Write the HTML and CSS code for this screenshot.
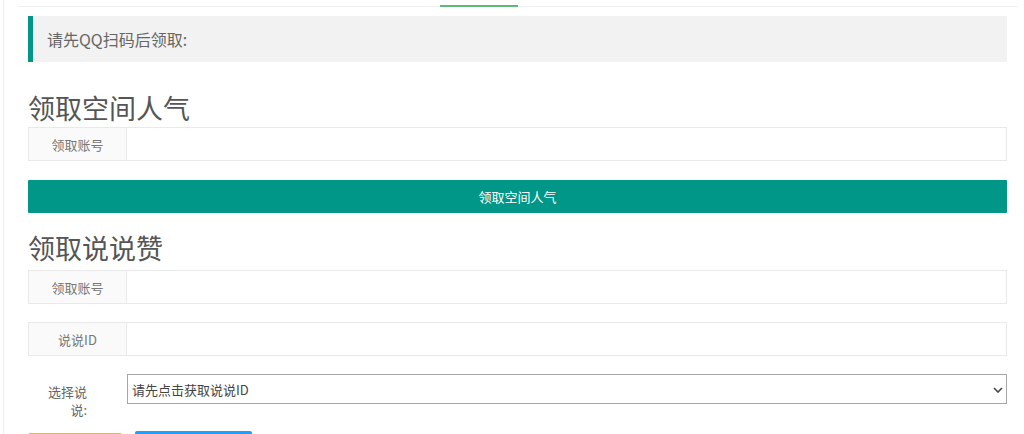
FILE: index.html
```html
<!DOCTYPE html>
<html lang="zh-CN">
<head>
<meta charset="utf-8">
<title>领取</title>
<link rel="stylesheet" href="styles.css">
</head>
<body>
<div class="page">
  <div class="tab-title"><span class="tab-this"></span></div>
  <div class="content">
    <div class="quote">请先QQ扫码后领取:</div>

    <h2 class="heading heading-first">领取空间人气</h2>
    <div class="input-group">
      <span class="addon">领取账号</span>
      <input class="field" type="text">
    </div>
    <button class="btn btn-main" type="button">领取空间人气</button>

    <h2 class="heading heading-second">领取说说赞</h2>
    <div class="input-group">
      <span class="addon">领取账号</span>
      <input class="field" type="text">
    </div>
    <div class="input-group gap">
      <span class="addon">说说ID</span>
      <input class="field" type="text">
    </div>

    <div class="select-row">
      <label class="select-label">选择说说:</label>
      <div class="select-wrap">
        <select class="select">
          <option>请先点击获取说说ID</option>
        </select>
        <svg class="chevron" width="10" height="6" viewBox="0 0 10 6"><path d="M1 1l4 4 4-4" fill="none" stroke="#444" stroke-width="1.6"/></svg>
      </div>
    </div>

    <div class="btn-row">
      <button class="btn btn-warm" type="button" aria-label="获取说说"></button>
      <button class="btn btn-blue" type="button" aria-label="领取说说赞"></button>
    </div>
  </div>
</div>
</body>
</html>
```

FILE: styles.css
```css
html, body {
  margin: 0;
  padding: 0;
  background: #fff;
  overflow: hidden;
}

body {
  font-family: "Noto Sans CJK SC", "Liberation Sans", sans-serif;
  color: #333;
}

.page {
  margin-left: 3px;
  border-left: 1px solid #f0f0f0;
  min-height: 434px;
}

.tab-title {
  display: flex;
  align-items: flex-end;
  height: 6px;
  margin: 0 6px 0 14px;
  border-bottom: 1px solid #f0f0f0;
}

.tab-this {
  display: block;
  width: 78px;
  height: 2px;
  margin-left: 422px;
  margin-bottom: -1px;
  background: #5fb878;
}

.content {
  padding: 0 17px 0 24px;
}

.quote {
  margin-top: 9px;
  padding: 12px 14px;
  border-left: 5px solid #009688;
  background: #f2f2f2;
  font-size: 16px;
  line-height: 22px;
  color: #666;
}

.heading {
  margin: 0;
  font-size: 27px;
  line-height: 32px;
  font-weight: normal;
  color: #555;
}

.heading-first {
  margin-top: 30px;
  margin-bottom: 3px;
}

.heading-second {
  margin-top: 19px;
  margin-bottom: 6px;
}

.input-group {
  display: flex;
  height: 34px;
  box-sizing: border-box;
}

.input-group.gap {
  margin-top: 18px;
}

.addon {
  width: 99px;
  flex: none;
  box-sizing: border-box;
  display: flex;
  align-items: center;
  justify-content: center;
  background: #fafafa;
  border: 1px solid #e9e9e9;
  font-size: 13px;
  color: #777;
}

.field {
  flex: 1;
  min-width: 0;
  box-sizing: border-box;
  height: 34px;
  margin: 0;
  padding: 0 10px;
  border: 1px solid #e9e9e9;
  border-left: none;
  background: #fff;
  outline: none;
  font: inherit;
  font-size: 13px;
}

.btn {
  border: none;
  margin: 0;
  padding: 0;
  font-family: inherit;
  font-size: 13px;
  color: #fff;
  cursor: pointer;
}

.btn-main {
  display: block;
  width: 100%;
  height: 33px;
  margin-top: 19px;
  background: #009688;
  border-radius: 1px;
}

.select-row {
  display: flex;
  align-items: flex-start;
  margin-top: 18px;
}

.select-label {
  width: 99px;
  flex: none;
  box-sizing: border-box;
  padding: 9px 40px 0 14px;
  text-align: right;
  font-size: 13px;
  line-height: 18px;
  color: #666;
}

.select-wrap {
  position: relative;
  flex: 1;
}

.select {
  display: block;
  width: 100%;
  height: 30px;
  box-sizing: border-box;
  margin: 0;
  padding: 0 20px 0 4px;
  border: 1px solid #a6a6a6;
  border-radius: 0;
  background: #fff;
  appearance: none;
  -webkit-appearance: none;
  font-family: inherit;
  font-size: 13px;
  color: #444;
  outline: none;
}

.chevron {
  position: absolute;
  right: 4px;
  top: 13px;
  pointer-events: none;
}

.btn-row {
  display: flex;
  align-items: flex-start;
  gap: 13px;
  margin-top: 12px;
}

.btn-warm {
  width: 94px;
  height: 38px;
  margin-top: 2px;
  background: #ffb800;
  border-radius: 2px;
}

.btn-blue {
  width: 117px;
  height: 38px;
  background: #1e9fff;
  border-radius: 2px;
}
```
